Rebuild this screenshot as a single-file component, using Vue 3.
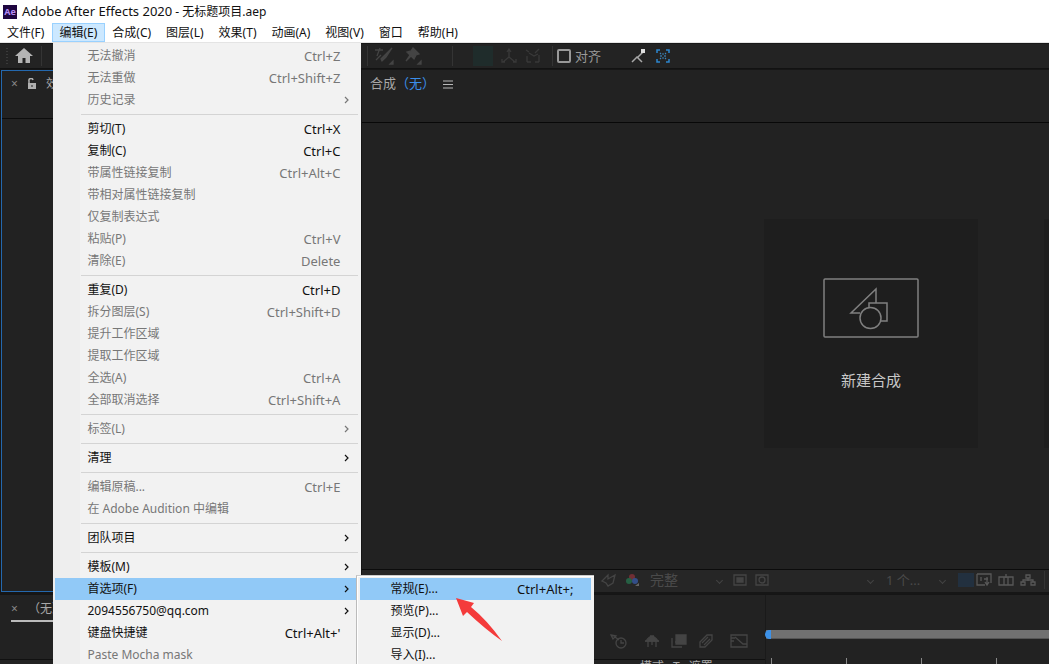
<script setup>
const menus = ['文件(F)', '编辑(E)', '合成(C)', '图层(L)', '效果(T)', '动画(A)', '视图(V)', '窗口', '帮助(H)']
const groups = [
  [
    { t: '无法撤消', k: 'Ctrl+Z', off: true },
    { t: '无法重做', k: 'Ctrl+Shift+Z', off: true },
    { t: '历史记录', sub: true, off: true },
  ],
  [
    { t: '剪切(T)', k: 'Ctrl+X' },
    { t: '复制(C)', k: 'Ctrl+C' },
    { t: '带属性链接复制', k: 'Ctrl+Alt+C', off: true },
    { t: '带相对属性链接复制', off: true },
    { t: '仅复制表达式', off: true },
    { t: '粘贴(P)', k: 'Ctrl+V', off: true },
    { t: '清除(E)', k: 'Delete', off: true },
  ],
  [
    { t: '重复(D)', k: 'Ctrl+D' },
    { t: '拆分图层(S)', k: 'Ctrl+Shift+D', off: true },
    { t: '提升工作区域', off: true },
    { t: '提取工作区域', off: true },
    { t: '全选(A)', k: 'Ctrl+A', off: true },
    { t: '全部取消选择', k: 'Ctrl+Shift+A', off: true },
  ],
  [{ t: '标签(L)', sub: true, off: true }],
  [{ t: '清理', sub: true }],
  [
    { t: '编辑原稿...', k: 'Ctrl+E', off: true },
    { t: '在 Adobe Audition 中编辑', off: true },
  ],
  [{ t: '团队项目', sub: true }],
  [
    { t: '模板(M)', sub: true },
    { t: '首选项(F)', sub: true, open: true },
    { t: '2094556750@qq.com', sub: true },
    { t: '键盘快捷键', k: "Ctrl+Alt+'" },
    { t: 'Paste Mocha mask', off: true },
  ],
]
const prefs = [
  { t: '常规(E)...', k: 'Ctrl+Alt+;', hot: true },
  { t: '预览(P)...' },
  { t: '显示(D)...' },
  { t: '导入(I)...' },
]
</script>

<template>
  <div class="app">
    <header class="titlebar">
      <span class="logo">Ae</span>
      <span class="title"><span class="product">Adobe After Effects 2020</span> - 无标题项目.aep</span>
    </header>

    <nav class="menubar">
      <div v-for="(m, i) in menus" :key="m" class="slot">
        <button class="menu-btn" :class="{ active: i === 1 }">{{ m }}</button>
        <div v-if="i === 1" class="menu edit-menu">
          <div v-for="(g, gi) in groups" :key="gi" class="group">
            <div v-for="it in g" :key="it.t" class="row">
              <button class="item" :class="{ hot: it.open }" :disabled="it.off">
                <span>{{ it.t }}</span>
                <span v-if="it.k" class="key">{{ it.k }}</span>
                <svg v-if="it.sub" class="chev" viewBox="0 0 6 8"><path d="M1 1l3 3-3 3" /></svg>
              </button>
              <div v-if="it.open" class="menu submenu">
                <button v-for="p in prefs" :key="p.t" class="item" :class="{ hot: p.hot }">
                  <span>{{ p.t }}</span>
                  <span v-if="p.k" class="key">{{ p.k }}</span>
                </button>
                <svg class="pointer" viewBox="0 0 48 45">
                  <path d="M0 1L18 6L15 10Q31 23 46 44Q29 32 11 15L7 19Z" />
                </svg>
              </div>
            </div>
          </div>
        </div>
      </div>
    </nav>

    <div class="toolbar">
      <div class="home">
        <span class="grip"></span>
        <button class="tool" aria-label="主页">
          <svg width="18" height="16" viewBox="0 0 18 16"><path fill="#b4b4b4" d="M9 0L0 8h3v7h4.500v-5h3v5H15V8h3z" /></svg>
        </button>
        <span class="divider"></span>
      </div>
      <div class="tools">
        <span class="divider"></span>
        <svg class="dim" width="20" height="18" viewBox="0 0 20 18"><path d="M1 3h8M6 1L3 9M2 13l5-5" /><path class="fill" d="M18 1l-6 9-4 4-1-2 4-4zM19 17v-3l-3 3z" /></svg>
        <svg class="dim solid" width="20" height="18" viewBox="0 0 20 18"><path d="M11 1l6 6-3 1-2 4-3-3-5 5 4-6-3-3 4-1zM19 17v-3l-3 3z" /></svg>
        <span class="divider far"></span>
        <span class="axis"></span>
        <svg class="dim faint" width="16" height="16" viewBox="0 0 16 16"><path d="M8 2v7l-6 5M8 9l6 5M6 4l2-3 2 3M1 11v3h3M15 11v3h-3" /></svg>
        <svg class="dim faint" width="16" height="16" viewBox="0 0 16 16"><path d="M1 2l3 2M14 1l-4 4M2 14V8M14 14V7M4 5l5 3 4-2M2 14h4M10 14h4" /></svg>
        <span class="divider snapdiv"></span>
        <label class="snap"><input type="checkbox" />对齐</label>
        <svg class="snap-a" width="15" height="14" viewBox="0 0 15 14"><path d="M1 13l5-5 5 5M7 8l5-5" fill="none" stroke="#a8a8a8" stroke-width="1.500" /><path d="M10 0h4v4h-4z" fill="#ddd" /></svg>
        <svg width="14" height="14" viewBox="0 0 14 14"><path d="M1 4V1h3M10 1h3v3M13 10v3h-3M4 13H1v-3" fill="none" stroke="#2d87cf" stroke-width="1.500" /><path d="M4 4l1 1M10 4L9 5M4 10l1-1M10 10L9 9M6 5h2M6 9h2M5 6v2M9 6v2" fill="none" stroke="#3d83b8" stroke-width="1.200" /></svg>
      </div>
    </div>

    <main class="work">
      <section class="effects">
        <div class="panel-head">
          <span class="close">×</span>
          <svg width="10" height="12" viewBox="0 0 10 12"><path d="M2 6V3a2 2 0 0 1 4-1" fill="none" stroke="#b0b0b0" stroke-width="1.500" /><path d="M1 5h8v6H1z" fill="#b0b0b0" /><path d="M4.500 7h1v2h-1z" fill="#222" /></svg>
          <span>效</span>
        </div>
      </section>
      <section class="comp">
        <div class="comp-head">
          <span>合成</span><a href="#">（无）</a>
          <svg width="10" height="9" viewBox="0 0 10 9"><path d="M0 1h10M0 4.500h10M0 8h10" stroke="#b8b8b8" /></svg>
        </div>
        <div class="viewer">
          <button class="card">
            <svg width="96" height="60" viewBox="0 0 96 60">
              <rect x="1" y="1" width="94" height="58" rx="1" />
              <path d="M37 35H28L53 11v14M46 29v-4h18v18h-6" />
              <circle cx="47.500" cy="40" r="10.500" />
            </svg>
            <span>新建合成</span>
          </button>
          <div class="card next"></div>
        </div>
        <div class="comp-foot">
          <svg class="dim" width="16" height="14" viewBox="0 0 16 14"><path d="M1 8l6-6v4l7-4-2 8-5 3-2-3z" /></svg>
          <svg width="14" height="14" viewBox="0 0 14 14"><circle cx="7" cy="4" r="3" fill="#702f35" /><circle cx="4" cy="8" r="3" fill="#266044" /><circle cx="10" cy="8" r="3" fill="#334e88" /><path d="M10 13h4v-3z" fill="#666" /></svg>
          <span class="quality">完整</span>
          <i class="caret"></i>
          <svg class="dim" width="14" height="12" viewBox="0 0 14 12"><path d="M1 1h12v10H1z" /><path class="fill" d="M4 4h6v4H4z" /></svg>
          <svg class="dim" width="14" height="12" viewBox="0 0 14 12"><path d="M1 1h12v10H1z" /><circle cx="7" cy="6" r="3" /></svg>
          <i class="caret wide"></i>
          <span class="views">1 个...</span>
          <i class="caret short"></i>
          <span class="blue"></span>
          <svg class="dim lit" width="16" height="14" viewBox="0 0 16 14"><path d="M1 1h14v9M1 1v11h8M5 4v4M8 6h4M11 4v7M9 9l2 3 2-3" /></svg>
          <svg class="dim lit" width="16" height="14" viewBox="0 0 16 14"><path d="M1 4h5v8H1zM6 4h4v8H6zM10 4h5v8h-5zM8 1v4" /></svg>
          <svg class="dim lit" width="16" height="14" viewBox="0 0 16 14"><path d="M6 2h4v3H6zM1 9h4v3H1zM11 9h4v3h-4zM8 5v3M3 9V7h10v2" /></svg>
          <span class="divider"></span>
        </div>
      </section>
    </main>

    <section class="timeline">
      <div class="layers">
        <div class="tab"><span class="close">×</span><span>（无）</span></div>
        <div class="switches">
          <svg class="dim first" width="18" height="16" viewBox="0 0 18 16"><path d="M1 2l5 1-3 3zM5 4l4 3" /><circle cx="11" cy="10" r="5" /><path d="M11 7v3h3" /></svg>
          <svg class="dim" width="16" height="16" viewBox="0 0 16 16"><path class="fill" d="M2 8q6-9 12 0zM6 3h4" /><path d="M1 8h14M4 8v6M12 8v6M8 8v4" /></svg>
          <svg class="dim" width="16" height="16" viewBox="0 0 16 16"><path class="fill" d="M5 2h10v9H5z" /><path d="M1 5v9h10M4 9h3" /></svg>
          <svg class="dim" width="16" height="16" viewBox="0 0 16 16"><path d="M2 9l7-7h5v5l-7 7H2zM4 10l6-6M6 12l6-6" /></svg>
          <svg class="dim last" width="18" height="16" viewBox="0 0 18 16"><path d="M1 2h16v12H1zM1 5h4M1 8h3M5 4l8 7h4" /></svg>
        </div>
        <div class="columns"><span>模式</span><span>T</span><span>遮罩</span></div>
      </div>
      <div class="time">
        <div class="range"><span class="knob"></span></div>
        <div class="ticks"></div>
      </div>
    </section>
  </div>
</template>

<style>
html, body { margin: 0; background: #222; }
</style>
<style scoped>
* { box-sizing: border-box; }
.app {
  height: 100vh; overflow: hidden; display: flex; flex-direction: column;
  background: #222; color: #a8a8a8;
  font: 12px/16px "Noto Sans", "Noto Sans CJK SC", sans-serif;
}
button { font: inherit; border: 0; background: none; color: inherit; padding: 0; }
svg { flex: none; }
.titlebar { height: 23px; flex: none; display: flex; align-items: center; gap: 5px; padding-left: 3px; background: #fff; color: #111; }
.product { font-size: 13px; }
.logo { width: 14px; height: 14px; background: #1f0640; color: #b58cf5; font: bold 9px/14px "Noto Sans", sans-serif; text-align: center; }
.menubar { height: 20px; flex: none; display: flex; background: #fff; color: #111; border-bottom: 1px solid #e4e4e4; }
.slot { position: relative; }
.menu-btn { height: 19px; padding: 0 7px 0 6px; border: 1px solid transparent; white-space: nowrap; line-height: 17px; }
.menu-btn.active { background: #cce8ff; border-color: #99d1ff; }
.menu { position: absolute; z-index: 5; color: #111; background: #f2f2f2; }
.edit-menu { top: 20px; left: 1px; width: 308px; padding: 2px 3px 2px 2px; background: linear-gradient(90deg, #eee 27px, #f2f2f2 27px); }
.group + .group::before { content: ""; display: block; height: 1px; margin: 3px 0 3px 26px; background: #d4d4d4; }
.row { position: relative; }
.item { width: 100%; height: 22px; display: flex; align-items: center; padding: 0 18px 0 32px; text-align: left; white-space: nowrap; }
.item:disabled { color: #777; }
.item.hot { background: #91c9f7; }
.key { margin-left: auto; font-size: 13px; }
.chev { width: 6px; height: 8px; margin-left: auto; margin-right: -10px; fill: none; stroke: currentColor; stroke-width: 1.2; }
.submenu { left: 301px; top: -3px; width: 238px; padding: 2px 3px; border-left: 1px solid #bbb; border-top: 1px solid #ccc; box-shadow: inset 1px 1px #fff; }
.submenu .item { padding-left: 30px; }
.pointer { position: absolute; left: 99px; top: 21px; width: 48px; height: 45px; fill: #f43b3b; }

.toolbar { height: 26px; flex: none; display: grid; grid-template-columns: 363px 1fr; border-top: 1px solid #181818; border-bottom: 1px solid #121212; background: #232323; }
.home, .tools { display: flex; align-items: center; }
.home { padding-left: 6px; }
.grip { width: 2px; height: 16px; margin-right: 7px; background: repeating-linear-gradient(#3a3a3a 0 1px, transparent 1px 3px); }
.tool { display: flex; }
.divider { width: 1px; height: 20px; background: #343434; }
.home .divider { margin-left: 8px; }
.dim { fill: none; stroke: #444; stroke-width: 1.3; }
.dim .fill, .dim.solid { fill: #444; }
.dim.lit { stroke: #585858; }
.dim.faint { stroke: #393939; }
.tools { gap: 8px; }
.tools > .divider:first-child { margin-left: 4px; margin-right: -2px; }
.far { margin: 0 12px 0 22px; }
.axis { width: 20px; height: 20px; background: #1f2c2b; }
.snapdiv { margin: 0 -4px 0 3px; }
.snap { display: flex; align-items: center; gap: 4px; font-size: 13px; color: #999; }
.snap input { appearance: none; width: 14px; height: 14px; margin: 0; border: 2px solid #999; border-radius: 2px; }
.snap-a { margin: 0 2px 0 22px; }

.work { flex: 1; min-height: 0; display: grid; grid-template-columns: 361px 1fr; gap: 1px; padding-top: 1px; background: #161616; }
.effects { border: 1px solid #2468ae; border-right-color: #1a1a1a; background: #222; margin-left: 1px; margin-bottom: 2px; }
.panel-head { height: 48px; display: flex; align-items: flex-start; gap: 9px; padding: 5px 0 0 9px; border-bottom: 1px solid #0c0c0c; white-space: nowrap; }
.panel-head svg { margin-top: 2px; }
.close { color: #888; }
.comp { display: flex; flex-direction: column; background: #222; min-width: 0; }
.comp-head { height: 53px; flex: none; display: flex; align-items: flex-start; padding: 5px 0 0 8px; font-size: 13px; border-bottom: 1px solid #080808; }
.comp-head a { color: #3b8eea; text-decoration: none; }
.comp-head svg { margin: 5px 0 0 8px; }
.viewer { flex: 1; display: flex; justify-content: flex-end; align-items: center; gap: 66px; overflow: hidden; padding-bottom: 26px; }
.card { flex: none; width: 214px; height: 229px; background: #1e1e1e; display: flex; flex-direction: column; align-items: center; padding-top: 59px; gap: 34px; font-size: 15px; color: #c8c8c8; }
.card svg { fill: none; stroke: #808080; stroke-width: 1.5; }
.card.next { width: 5px; }
.comp-foot { height: 25px; flex: none; display: flex; align-items: center; gap: 8px; padding: 0 0 2px 239px; border-top: 1px solid #0c0c0c; border-bottom: 2px solid #161616; background: #262626; color: #4a4a4a; }
.quality { font-size: 14px; margin-left: 3px; }
.caret { width: 5px; height: 5px; border: solid #444; border-width: 0 1px 1px 0; rotate: 45deg; margin: 0 3px 0 31px; }
.caret.wide { margin-left: 91px; margin-right: 5px; }
.views { font-size: 13px; }
.caret.short { margin-left: 12px; margin-right: 5px; }
.blue { width: 16px; height: 14px; margin-right: -6px; background: #22303f; }
.dim.lit + .dim.lit { margin-left: -2px; }
.lit + .divider { height: 18px; }

.timeline { height: 70px; flex: none; display: grid; grid-template-columns: 766px 1fr; border-top: 1px solid #151515; }
.layers { display: flex; flex-direction: column; border-right: 1px solid #1a1a1a; }
.tab { width: 60px; height: 27px; display: flex; align-items: center; gap: 10px; margin-left: 11px; padding-top: 3px; border-bottom: 2px solid #bbb; white-space: nowrap; }
.switches { display: flex; gap: 11px; margin: 11px 0 0 610px; }
.first { margin-right: 5px; }
.last { margin-left: 5px; }
.columns { display: flex; gap: 9px; margin-top: 10px; padding: 0 0 0 640px; border-top: 1px solid #111; line-height: 14px; white-space: nowrap; }
.time { padding-top: 35px; }
.range { position: relative; height: 9px; background: #717171; border-bottom: 1px solid #555; }
.knob { position: absolute; left: -1px; top: 0; width: 6px; height: 9px; background: #3c91e8; border-radius: 5px 0 0 5px; }
.ticks { height: 10px; margin: 19px 0 0 5px; background: repeating-linear-gradient(90deg, #888 0 1px, transparent 1px 75px); }
</style>
